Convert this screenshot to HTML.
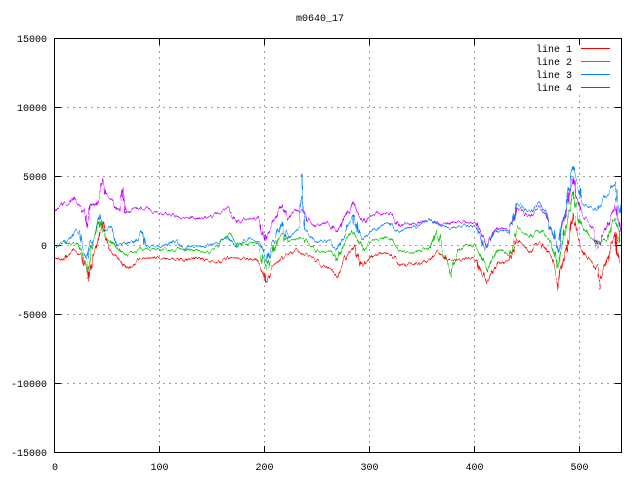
<!DOCTYPE html>
<html><head><meta charset="utf-8"><style>
html,body{margin:0;padding:0;background:#fff;}
svg{display:block;font-family:"Liberation Mono","DejaVu Sans Mono",monospace;font-size:10px;}
</style></head><body>
<svg width="640" height="480" viewBox="0 0 640 480" xmlns="http://www.w3.org/2000/svg">
<defs>
<filter id="j" x="-5%" y="-20%" width="110%" height="140%">
<feTurbulence type="fractalNoise" baseFrequency="0.35 0.05" numOctaves="2" seed="3" result="n"/>
<feDisplacementMap in="SourceGraphic" in2="n" scale="7" xChannelSelector="R" yChannelSelector="G"/>
</filter>
</defs>
<rect width="640" height="480" fill="#fff"/>
<text x="320" y="21" text-anchor="middle">m0640_17</text>
<g stroke="#a0a0a0" stroke-width="1" stroke-dasharray="2,4" fill="none">
<line x1="55" y1="107.5" x2="621" y2="107.5"/>
<line x1="55" y1="176.5" x2="621" y2="176.5"/>
<line x1="55" y1="245.5" x2="621" y2="245.5"/>
<line x1="55" y1="314.5" x2="621" y2="314.5"/>
<line x1="55" y1="383.5" x2="621" y2="383.5"/>
<line x1="159.5" y1="39" x2="159.5" y2="452"/>
<line x1="264.5" y1="39" x2="264.5" y2="452"/>
<line x1="369.5" y1="39" x2="369.5" y2="452"/>
<line x1="474.5" y1="39" x2="474.5" y2="452"/>
<line x1="579.5" y1="95" x2="579.5" y2="452"/>
</g>
<g fill="#000" text-anchor="end">
<text x="47" y="42">15000</text>
<text x="47" y="111">10000</text>
<text x="47" y="180">5000</text>
<text x="47" y="249">0</text>
<text x="47" y="318">-5000</text>
<text x="47" y="387">-10000</text>
<text x="47" y="456">-15000</text>
</g>
<g fill="#000" text-anchor="middle">
<text x="55" y="470">0</text>
<text x="159.5" y="470">100</text>
<text x="264.5" y="470">200</text>
<text x="369.5" y="470">300</text>
<text x="474.5" y="470">400</text>
<text x="579.5" y="470">500</text>
</g>
<g stroke="#000" stroke-width="1">
<path d="M55 107.5h6M55 176.5h6M55 245.5h6M55 314.5h6M55 383.5h6M621 107.5h-6M621 176.5h-6M621 245.5h-6M621 314.5h-6M621 383.5h-6"/>
<path d="M159.5 452v-6M264.5 452v-6M369.5 452v-6M474.5 452v-6M579.5 452v-6M159.5 39v6M264.5 39v6M369.5 39v6M474.5 39v6M579.5 39v6"/>
</g>
<g fill="none" stroke-width="1" stroke-linejoin="round" filter="url(#j)">
<polyline stroke="#c000ff" points="55,210 60,206 63,202 68,205 73,198 78,204 82,207 85,215 87,228 90,212 92,203 95,206 98,200 101,190 103,178 105,192 108,197 112,200 116,206 120,210 122,194 123,188 124,213 128,212 132,208 137,207 142,210 147,209 152,213 157,212 163,214 170,214 176,217 183,218 190,217 196,219 203,218 210,217 216,214 222,210 228,208 232,216 237,222 243,220 250,219 257,218 262,225 265,240 268,232 273,222 277,215 282,205 285,212 287,220 292,214 297,210 303,210 308,220 315,227 320,224 327,222 333,228 337,232 342,222 347,213 353,202 358,212 363,223 368,218 373,215 380,212 386,214 390,213 395,220 400,227 405,222 410,225 417,223 423,221 430,220 436,222 443,225 450,222 457,222 462,222 470,223 477,223 482,235 487,248 492,236 497,227 503,228 510,230 514,218 517,207 522,210 527,216 530,217 535,210 540,207 545,214 550,223 554,238 558,253 562,230 567,203 570,188 573,178 576,192 580,210 585,218 593,228 596,240 598,250 602,235 607,227 611,215 615,203 618,220 620,233"/>
<polyline stroke="#0080ff" points="55,247 60,245 67,240 72,238 78,230 81,240 83,250 87,260 89,250 92,240 96,236 100,215 103,232 107,229 110,227 114,238 117,245 122,244 128,242 132,242 137,240 142,232 145,240 147,247 152,246 160,247 166,245 172,242 177,240 180,246 183,250 188,248 195,247 200,247 208,245 217,243 222,240 227,237 232,242 237,247 243,242 250,238 255,241 260,243 264,255 266,263 269,253 272,247 276,235 282,222 285,232 287,240 292,234 297,230 300,226 302,175 303,210 305,228 310,236 317,242 323,241 330,240 334,246 337,250 342,240 347,230 350,222 353,215 357,228 362,240 368,234 373,230 380,227 386,224 390,223 395,228 400,232 405,229 410,228 417,226 423,222 430,220 436,223 443,227 450,227 457,227 465,226 472,226 477,227 481,238 485,250 490,240 497,230 503,230 510,232 514,215 517,203 522,206 527,211 530,213 535,206 540,202 545,211 550,222 554,238 558,253 562,225 567,197 570,180 573,167 577,182 582,203 588,207 597,210 600,205 603,200 609,192 615,182 617,200 620,213"/>
<polyline stroke="#00c000" points="55,248 60,245 65,242 70,244 77,243 80,250 83,257 86,265 88,273 90,260 92,247 96,236 100,222 103,232 105,240 110,240 115,245 120,250 123,253 127,255 132,252 140,248 147,249 153,250 160,250 168,249 176,250 183,250 190,251 197,251 203,252 210,252 214,249 217,247 222,240 230,233 234,240 237,245 243,244 250,243 257,243 261,255 266,270 269,260 273,250 277,241 282,233 285,238 287,242 293,240 298,238 303,238 308,244 313,248 317,250 322,251 328,251 333,253 337,260 342,248 347,238 353,230 358,240 363,250 368,244 373,240 380,239 386,238 390,238 395,244 400,250 406,252 413,253 420,251 426,248 430,247 434,238 437,230 441,244 445,257 449,268 452,277 455,262 457,250 463,247 470,243 474,246 477,248 482,259 487,270 492,260 497,250 503,252 510,255 514,240 517,227 522,231 527,235 530,237 535,233 540,230 546,236 552,243 555,255 558,267 562,245 567,223 570,207 573,193 576,208 580,223 585,231 590,237 597,243 602,241 607,240 611,228 615,218 618,232 620,243"/>
<polyline stroke="#ff0000" points="55,258 59,259 63,260 68,255 73,250 77,253 80,255 84,263 87,273 88,282 90,270 93,257 97,243 100,233 103,223 105,235 108,247 113,253 118,258 122,263 125,267 128,270 133,265 140,258 147,258 153,258 160,258 168,259 176,259 183,260 190,259 197,258 200,258 208,261 217,263 223,260 230,257 237,258 245,259 252,259 257,260 262,270 266,282 269,275 273,267 278,262 283,257 290,253 297,250 303,253 308,256 313,257 318,262 323,267 330,267 334,272 337,277 342,265 347,254 353,245 357,256 362,267 368,260 373,255 380,254 386,253 390,253 395,259 400,265 408,264 417,263 423,262 430,260 434,255 437,250 442,255 447,260 452,260 457,260 463,259 470,258 474,259 477,260 482,272 487,283 492,273 497,263 503,262 510,260 514,248 517,238 522,245 527,250 530,252 535,246 540,242 546,250 552,257 555,272 557,290 560,270 564,258 567,250 570,230 573,213 576,230 580,247 585,255 590,260 597,267 599,290 602,272 607,260 611,245 615,232 618,250 620,265"/>
</g>
<rect x="54.5" y="38.5" width="567" height="414" fill="none" stroke="#000" stroke-width="1"/>
<g text-anchor="end" fill="#000">
<text x="572" y="52">line 1</text>
<text x="572" y="65">line 2</text>
<text x="572" y="78">line 3</text>
<text x="572" y="91">line 4</text>
</g>
<g stroke-width="1">
<line x1="581" y1="48.5" x2="610" y2="48.5" stroke="#ff0000"/>
<line x1="581" y1="61.5" x2="610" y2="61.5" stroke="#00c000"/>
<line x1="581" y1="74.5" x2="610" y2="74.5" stroke="#0080ff"/>
<line x1="581" y1="87.5" x2="610" y2="87.5" stroke="#c000ff"/>
</g>
</svg>
</body></html>
